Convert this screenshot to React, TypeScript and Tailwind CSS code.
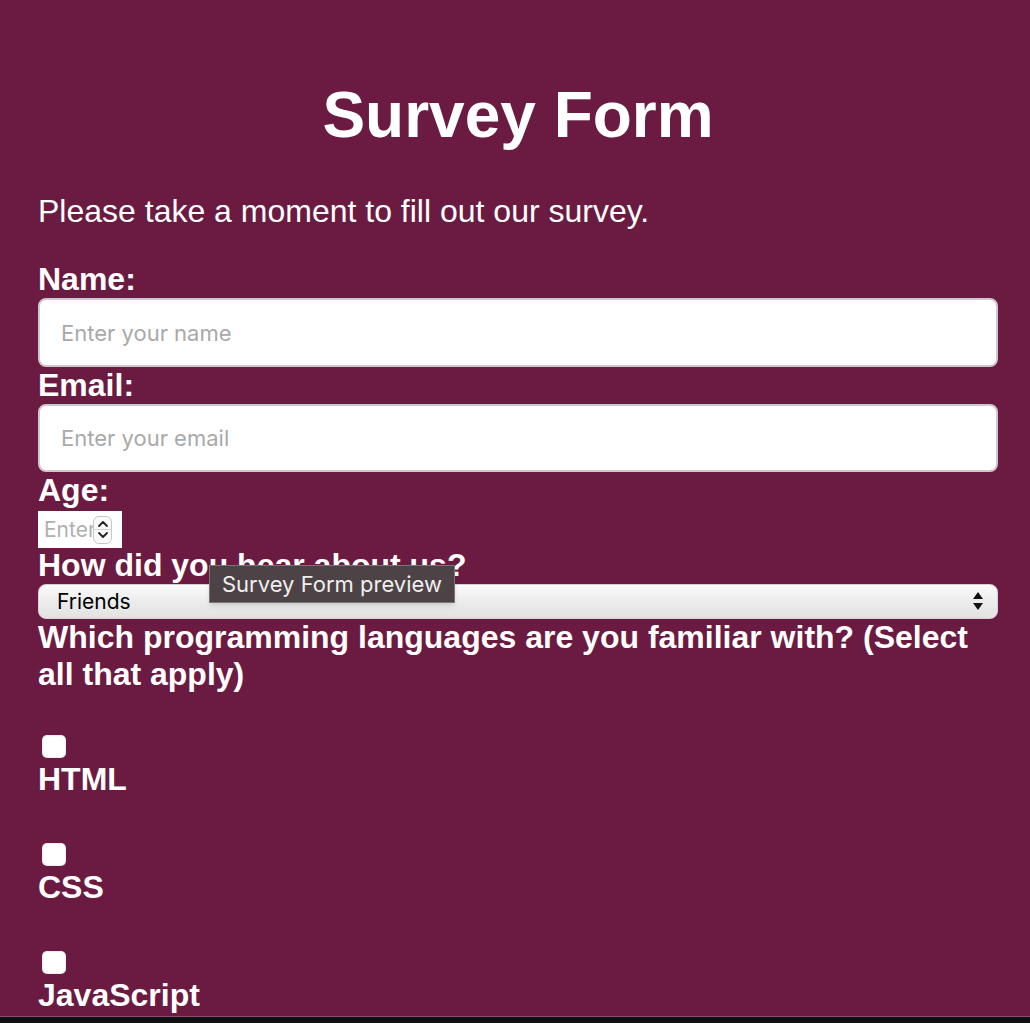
import React from "react";

const options = ["HTML", "CSS", "JavaScript"];

const labelCls = "block text-[32px] font-bold leading-[37px] text-white";

const AgeSpinner: React.FC = () => (
  <div className="w-[19px] h-[28px] rounded-[6px] border border-[#c8c8c8] bg-[#fafafa] flex flex-col items-center justify-center shrink-0">
    <svg width="12" height="9" viewBox="0 0 12 9" className="mb-[1px]">
      <path d="M2 7 L6 3 L10 7" fill="none" stroke="#222" strokeWidth="1.8" strokeLinecap="round" strokeLinejoin="round" />
    </svg>
    <div className="w-full h-px bg-[#d4d4d4]" />
    <svg width="12" height="9" viewBox="0 0 12 9" className="mt-[1px]">
      <path d="M2 2 L6 6 L10 2" fill="none" stroke="#222" strokeWidth="1.8" strokeLinecap="round" strokeLinejoin="round" />
    </svg>
  </div>
);

const App: React.FC = () => {
  return (
    <div className="relative h-screen flex flex-col bg-[#111] font-['Liberation_Sans',Arial,sans-serif]">
      <div className="flex-1 overflow-hidden bg-[#6b1b41] border-b border-[#8d4d6d] px-[38px] pt-[78px]">
        <form className="w-[960px]" onSubmit={(e) => e.preventDefault()}>
          <h1 className="text-center text-[64px] font-bold leading-[74px] text-white mb-[41px]">Survey Form</h1>
          <p className="text-[32px] leading-[37px] text-white mb-[31px]">Please take a moment to fill out our survey.</p>

          <label htmlFor="name" className={labelCls}>Name:</label>
          <input
            id="name"
            type="text"
            placeholder="Enter your name"
            className="block w-full h-[69px] rounded-lg border-2 border-[#cfc7cb] bg-white px-[21px] text-[22px] font-['Inter',sans-serif] placeholder:text-[#a9a9a9] outline-none"
          />

          <label htmlFor="email" className={labelCls}>Email:</label>
          <input
            id="email"
            type="email"
            placeholder="Enter your email"
            className="block w-full h-[68px] rounded-lg border-2 border-[#cfc7cb] bg-white px-[21px] text-[22px] font-['Inter',sans-serif] placeholder:text-[#a9a9a9] outline-none"
          />

          <label htmlFor="age" className={labelCls}>Age:</label>
          <div className="mt-[2px] w-[84px] h-[37px] bg-white flex items-center pl-[6px] pr-[10px]">
            <input
              id="age"
              type="text"
              placeholder="Enter your age"
              className="min-w-0 flex-1 bg-transparent text-[21px] font-['Inter',sans-serif] placeholder:text-[#b0b0b0] outline-none"
            />
            <AgeSpinner />
          </div>

          <label htmlFor="referral" className={`${labelCls} -mt-[1px]`}>How did you hear about us?</label>
          <div className="relative">
            <select
              id="referral"
              defaultValue="friends"
              className="block w-full h-[35px] appearance-none rounded-lg border border-[#d8d0d4] bg-gradient-to-b from-[#fbfbfb] via-[#ececec] to-[#e2e2e2] pl-[18px] text-[21px] text-black font-['Inter',sans-serif] outline-none"
            >
              <option value="friends">Friends</option>
              <option value="social">Social Media</option>
              <option value="search">Search Engine</option>
              <option value="other">Other</option>
            </select>
            <svg width="12" height="22" viewBox="0 0 12 22" className="pointer-events-none absolute right-[14px] top-[6px]">
              <path d="M6 2 L11 9 L1 9 Z" fill="#111" />
              <path d="M1 13 L11 13 L6 20 Z" fill="#111" />
            </svg>
          </div>

          <label className={labelCls}>Which programming languages are you familiar with? (Select all that apply)</label>

          <div className="flex flex-col">
            {options.map((opt, idx) => (
              <div key={opt} className={idx === 0 ? "mt-[42px]" : "mt-[45px]"}>
                <input
                  id={opt}
                  type="checkbox"
                  className="block ml-[4px] w-[24px] h-[23px] appearance-none rounded-[5px] bg-white shadow-[inset_0_0_2px_rgba(0,0,0,0.25)]"
                />
                <label htmlFor={opt} className={`${labelCls} mt-[3px]`}>{opt}</label>
              </div>
            ))}
          </div>
        </form>
      </div>
      <div className="h-[6px] bg-[#111]" />

      {/* browser tooltip hovering over the page */}
      <div className="absolute left-[209px] top-[565px] w-[246px] h-[38px] bg-[#4d4347] border border-[#777] shadow-md flex items-center pl-[12px] text-[22px] text-[#efefef] font-['Inter',sans-serif]">
        Survey Form preview
      </div>
    </div>
  );
};

export default App;
